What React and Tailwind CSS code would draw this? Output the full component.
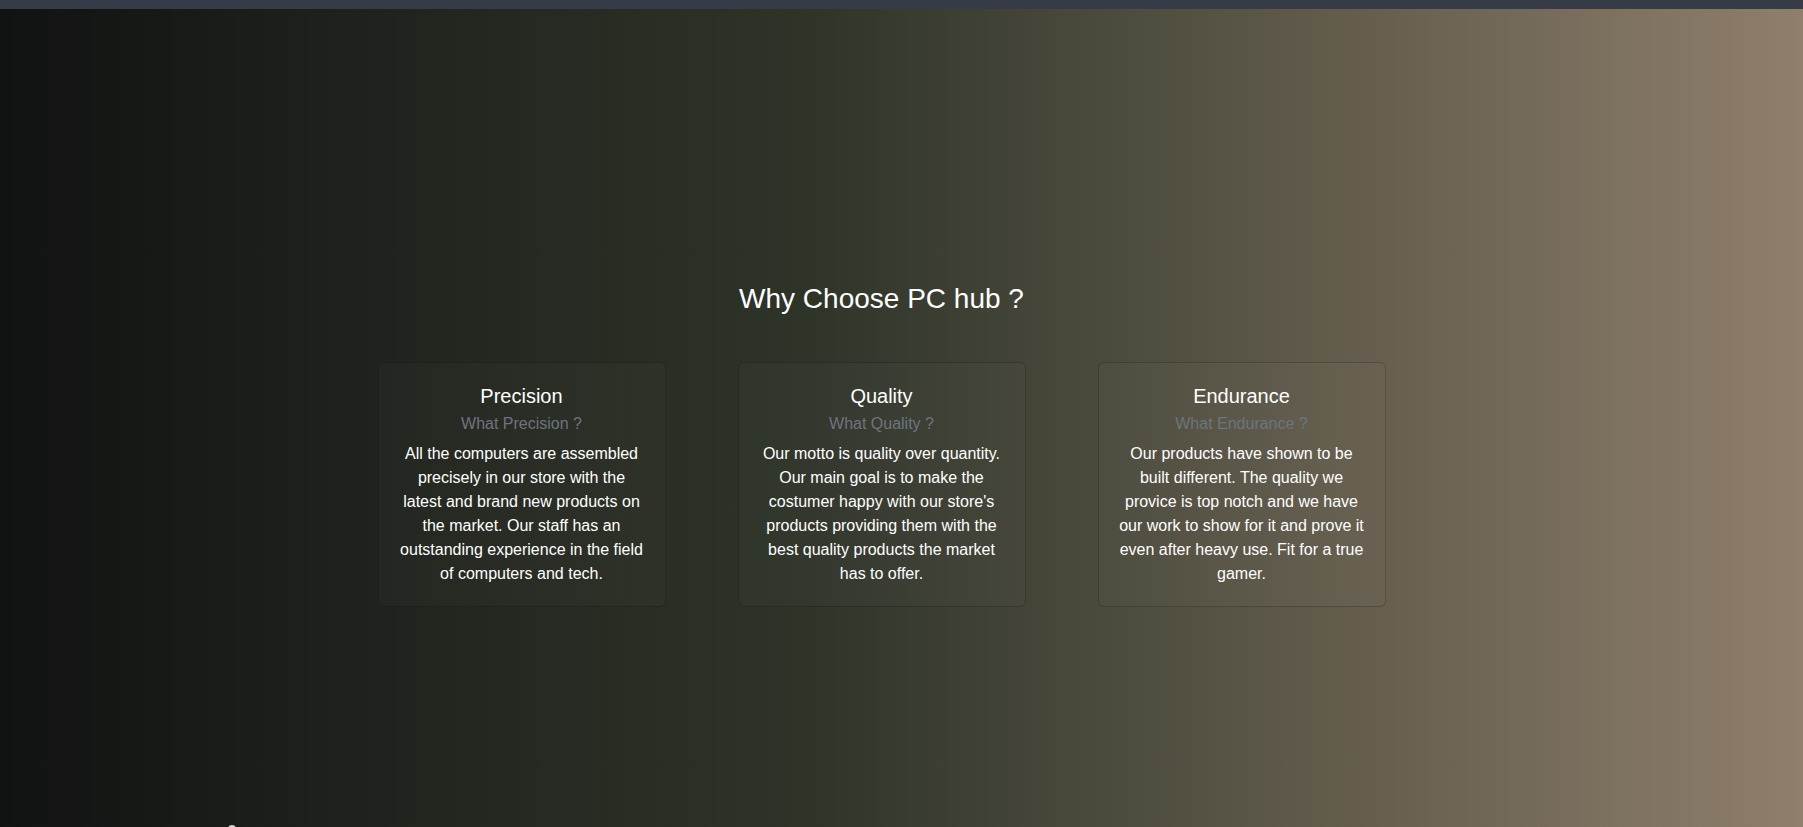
import React from "react";

const cards = [
  {
    title: "Precision",
    subtitle: "What Precision ?",
    text: "All the computers are assembled precisely in our store with the latest and brand new products on the market. Our staff has an outstanding experience in the field of computers and tech.",
  },
  {
    title: "Quality",
    subtitle: "What Quality ?",
    text: "Our motto is quality over quantity. Our main goal is to make the costumer happy with our store's products providing them with the best quality products the market has to offer.",
  },
  {
    title: "Endurance",
    subtitle: "What Endurance ?",
    text: "Our products have shown to be built different. The quality we provice is top notch and we have our work to show for it and prove it even after heavy use. Fit for a true gamer.",
  },
];

export default function App() {
  return (
    <div
      className="h-screen w-full overflow-hidden bg-[linear-gradient(to_right,#111212_0%,#22261f_25%,#2f3429_45%,#8f7f6c_100%)] text-white"
      style={{ fontFamily: '"Liberation Sans", Arial, sans-serif' }}
    >
      <div className="h-[9px] w-full bg-[#363c47]" />
      <section className="flex flex-col items-center pr-10 pt-[273px]">
        <h2 className="text-[28px] leading-[34px] font-normal">Why Choose PC hub ?</h2>
        <div className="mt-[46px] flex gap-[72px]">
          {cards.map((c) => (
            <div
              key={c.title}
              className="flex w-[288px] flex-col items-center rounded-md border border-black/20 bg-white/[0.02] px-[19px] pt-[21px] pb-[20px] text-center"
            >
              <h5 className="text-[20px] leading-[24px] font-normal">{c.title}</h5>
              <h6 className="mt-[6px] text-base leading-[19px] font-normal text-[#6c757d]">{c.subtitle}</h6>
              <p className="mt-[9px] text-base leading-6">{c.text}</p>
            </div>
          ))}
        </div>
      </section>
      <div className="mt-[218px] pl-[228px]">
        <div className="h-1 w-2 rounded-t-full bg-[#d4d4d4]" />
      </div>
    </div>
  );
}
